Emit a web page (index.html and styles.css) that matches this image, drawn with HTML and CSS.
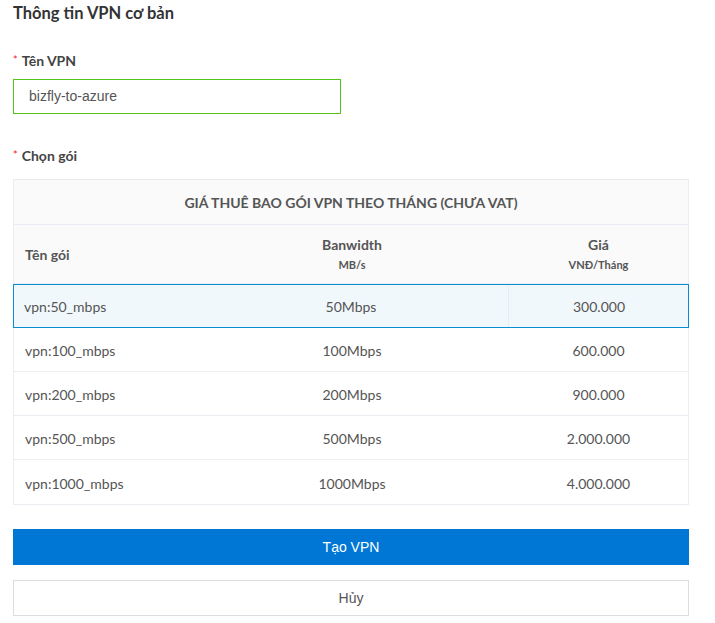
FILE: index.html
```html
<!DOCTYPE html>
<html>
<head>
<meta charset="utf-8">
<link rel="stylesheet" href="styles.css">
</head>
<body>
<div class="page">
  <h2 class="title">Thông tin VPN cơ bản</h2>
  <div class="field">
    <label class="label"><span class="req">*</span>Tên VPN</label>
    <div class="input">bizfly-to-azure</div>
  </div>
  <div class="field field-plan">
    <label class="label"><span class="req">*</span>Chọn gói</label>
    <div class="table">
      <div class="caption">GIÁ THUÊ BAO GÓI VPN THEO THÁNG (CHƯA VAT)</div>
      <div class="row head">
        <div class="cell c1">Tên gói</div>
        <div class="cell c2"><div>Banwidth</div><div class="sub">MB/s</div></div>
        <div class="cell c3"><div>Giá</div><div class="sub">VNĐ/Tháng</div></div>
      </div>
      <div class="row selected">
        <div class="cell c1">vpn:50_mbps</div>
        <div class="cell c2">50Mbps</div>
        <div class="cell c3">300.000</div>
      </div>
      <div class="row">
        <div class="cell c1">vpn:100_mbps</div>
        <div class="cell c2">100Mbps</div>
        <div class="cell c3">600.000</div>
      </div>
      <div class="row">
        <div class="cell c1">vpn:200_mbps</div>
        <div class="cell c2">200Mbps</div>
        <div class="cell c3">900.000</div>
      </div>
      <div class="row">
        <div class="cell c1">vpn:500_mbps</div>
        <div class="cell c2">500Mbps</div>
        <div class="cell c3">2.000.000</div>
      </div>
      <div class="row last">
        <div class="cell c1">vpn:1000_mbps</div>
        <div class="cell c2">1000Mbps</div>
        <div class="cell c3">4.000.000</div>
      </div>
    </div>
  </div>
  <div class="actions">
    <button class="btn primary">Tạo VPN</button>
    <button class="btn default">Hủy</button>
  </div>
</div>
</body>
</html>
```
FILE: styles.css
```css
* { box-sizing: border-box; }
html, body { margin: 0; padding: 0; background: #fff; }
body { font-family: Lato, "Noto Sans", sans-serif; color: #555; }
.page { width: 676px; margin-left: 13px; padding-top: 1px; }
.title { margin: 0; font-size: 16.5px; font-weight: 700; color: #333; line-height: 24px; }
.field { margin-top: 26px; }
.field-plan { margin-top: 32px; }
.label { display: block; font-size: 14px; font-weight: 700; color: #444; line-height: 18px; }
.req { color: #f5222d; font-weight: 400; margin-right: 4px; font-size: 11px; vertical-align: 2px; }
.input { margin-top: 9px; width: 328px; height: 35px; border: 1px solid #52c41a; padding: 0 15px; font-family: "Liberation Sans", Arial, sans-serif; font-size: 14px; color: #555; line-height: 33px; }
.table { margin-top: 14px; border: 1px solid #ebedf2; border-top-color: #e8ebf0; }
.caption { height: 45px; background: #fafafa; border-bottom: 1px solid #e8ebf2; text-align: center; font-size: 14px; font-weight: 700; color: #555; line-height: 45px; }
.row { display: flex; height: 44px; border-bottom: 1px solid #ebedf2; font-size: 14px; color: #555; }
.row .cell { padding-top: 2px; }
.row.last { border-bottom: none; height: 44px; }
.row.head { height: 59px; background: #fafafa; font-weight: 700; font-size: 14px; color: #555; }
.row.head .cell { padding-top: 0; }
.row.head .c1 { padding-top: 1px; }
.row.head .c2, .row.head .c3 { flex-direction: column; justify-content: center; align-items: center; padding-bottom: 1px; }
.row.head .sub { font-size: 11px; margin-top: 5px; }
.row.selected { background: #f1f8fc; outline: 1px solid #0a8dd3; outline-offset: -1px; margin: 0 -1px; width: calc(100% + 2px); border-bottom: 1px solid #0a8dd3; position: relative; }
.cell { display: flex; align-items: center; }
.c1 { width: 181px; padding-left: 11px; }
.c2 { width: 314px; justify-content: center; text-align: center; }
.c3 { flex: 1; justify-content: center; text-align: center; }
.row.selected .c3 { border-left: 1px solid #e3eef5; }
.actions { margin-top: 24px; display: flex; flex-direction: column; gap: 15px; }
.btn { display: block; width: 676px; height: 36px; font-family: "Liberation Sans", Arial, sans-serif; font-size: 14px; cursor: pointer; padding: 0; }
.primary { background: #0077d4; color: #fff; border: none; }
.default { background: #fff; color: #555; border: 1px solid #dcdde3; }
```
